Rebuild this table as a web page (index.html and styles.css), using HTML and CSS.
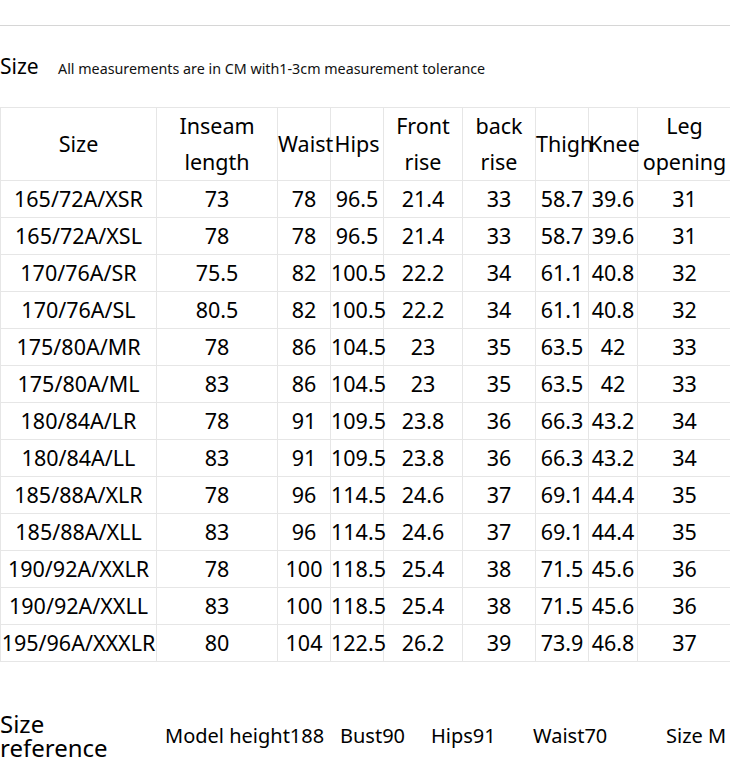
FILE: index.html
```html
<!DOCTYPE html>
<html>
<head>
<meta charset="utf-8">
<link rel="stylesheet" href="styles.css">
</head>
<body>
<div class="topline"></div>
<div class="title">
  <span class="title-main">Size</span>
  <span class="title-note">All measurements are in CM with1-3cm measurement tolerance</span>
</div>
<table class="chart">
  <colgroup>
    <col class="c1"><col class="c2"><col class="c3"><col class="c4"><col class="c5"><col class="c6"><col class="c7"><col class="c8"><col class="c9">
  </colgroup>
  <thead>
    <tr>
      <th>Size</th><th>Inseam<br>length</th><th>Waist</th><th>Hips</th><th>Front<br>rise</th><th>back<br>rise</th><th>Thigh</th><th>Knee</th><th>Leg<br>opening</th>
    </tr>
  </thead>
  <tbody>
    <tr><td>165/72A/XSR</td><td>73</td><td>78</td><td>96.5</td><td>21.4</td><td>33</td><td>58.7</td><td>39.6</td><td>31</td></tr>
    <tr><td>165/72A/XSL</td><td>78</td><td>78</td><td>96.5</td><td>21.4</td><td>33</td><td>58.7</td><td>39.6</td><td>31</td></tr>
    <tr><td>170/76A/SR</td><td>75.5</td><td>82</td><td>100.5</td><td>22.2</td><td>34</td><td>61.1</td><td>40.8</td><td>32</td></tr>
    <tr><td>170/76A/SL</td><td>80.5</td><td>82</td><td>100.5</td><td>22.2</td><td>34</td><td>61.1</td><td>40.8</td><td>32</td></tr>
    <tr><td>175/80A/MR</td><td>78</td><td>86</td><td>104.5</td><td>23</td><td>35</td><td>63.5</td><td>42</td><td>33</td></tr>
    <tr><td>175/80A/ML</td><td>83</td><td>86</td><td>104.5</td><td>23</td><td>35</td><td>63.5</td><td>42</td><td>33</td></tr>
    <tr><td>180/84A/LR</td><td>78</td><td>91</td><td>109.5</td><td>23.8</td><td>36</td><td>66.3</td><td>43.2</td><td>34</td></tr>
    <tr><td>180/84A/LL</td><td>83</td><td>91</td><td>109.5</td><td>23.8</td><td>36</td><td>66.3</td><td>43.2</td><td>34</td></tr>
    <tr><td>185/88A/XLR</td><td>78</td><td>96</td><td>114.5</td><td>24.6</td><td>37</td><td>69.1</td><td>44.4</td><td>35</td></tr>
    <tr><td>185/88A/XLL</td><td>83</td><td>96</td><td>114.5</td><td>24.6</td><td>37</td><td>69.1</td><td>44.4</td><td>35</td></tr>
    <tr><td>190/92A/XXLR</td><td>78</td><td>100</td><td>118.5</td><td>25.4</td><td>38</td><td>71.5</td><td>45.6</td><td>36</td></tr>
    <tr><td>190/92A/XXLL</td><td>83</td><td>100</td><td>118.5</td><td>25.4</td><td>38</td><td>71.5</td><td>45.6</td><td>36</td></tr>
    <tr><td>195/96A/XXXLR</td><td>80</td><td>104</td><td>122.5</td><td>26.2</td><td>39</td><td>73.9</td><td>46.8</td><td>37</td></tr>
  </tbody>
</table>
<div class="model">
  <div class="model-label">Size<br>reference</div>
  <div class="model-item">Model height188</div>
  <div class="model-item">Bust90</div>
  <div class="model-item">Hips91</div>
  <div class="model-item">Waist70</div>
  <div class="model-item">Size M</div>
</div>
</body>
</html>
```
FILE: styles.css
```css
html, body {
  margin: 0;
  padding: 0;
  background: #fff;
}
body {
  width: 730px;
  overflow: hidden;
  font-family: "Noto Sans", "Open Sans", sans-serif;
  color: #000;
}
.topline {
  height: 25px;
  border-bottom: 1px solid #d6d6d6;
}
.title {
  display: flex;
  align-items: baseline;
  margin-top: 27px;
  height: 26px;
  line-height: 26px;
}
.title-main {
  font-size: 21px;
  width: 58px;
}
.title-note {
  font-size: 14.3px;
  color: #111;
}
.chart {
  margin-top: 28px;
  border-collapse: collapse;
  table-layout: fixed;
  width: 731px;
}
.c1 { width: 156px; }
.c2 { width: 121px; }
.c3 { width: 53px; }
.c4 { width: 53px; }
.c5 { width: 79px; }
.c6 { width: 73px; }
.c7 { width: 53px; }
.c8 { width: 49px; }
.c9 { width: 94px; }
.chart th, .chart td {
  border: 1px solid #e6e6e6;
  padding: 0;
  text-align: center;
  font-size: 21.5px;
  font-weight: normal;
  white-space: nowrap;
  overflow: visible;
}
.chart th {
  height: 72px;
  line-height: 36px;
}
.chart td {
  height: 36px;
  line-height: 36px;
}
.model {
  display: grid;
  grid-template-columns: 165px 175px 91px 102px 133px auto;
  align-items: center;
  margin-top: 50px;
  white-space: nowrap;
}
.model-label {
  font-size: 24px;
  line-height: 24px;
}
.model-item {
  font-size: 20px;
  line-height: 24px;
}
```
